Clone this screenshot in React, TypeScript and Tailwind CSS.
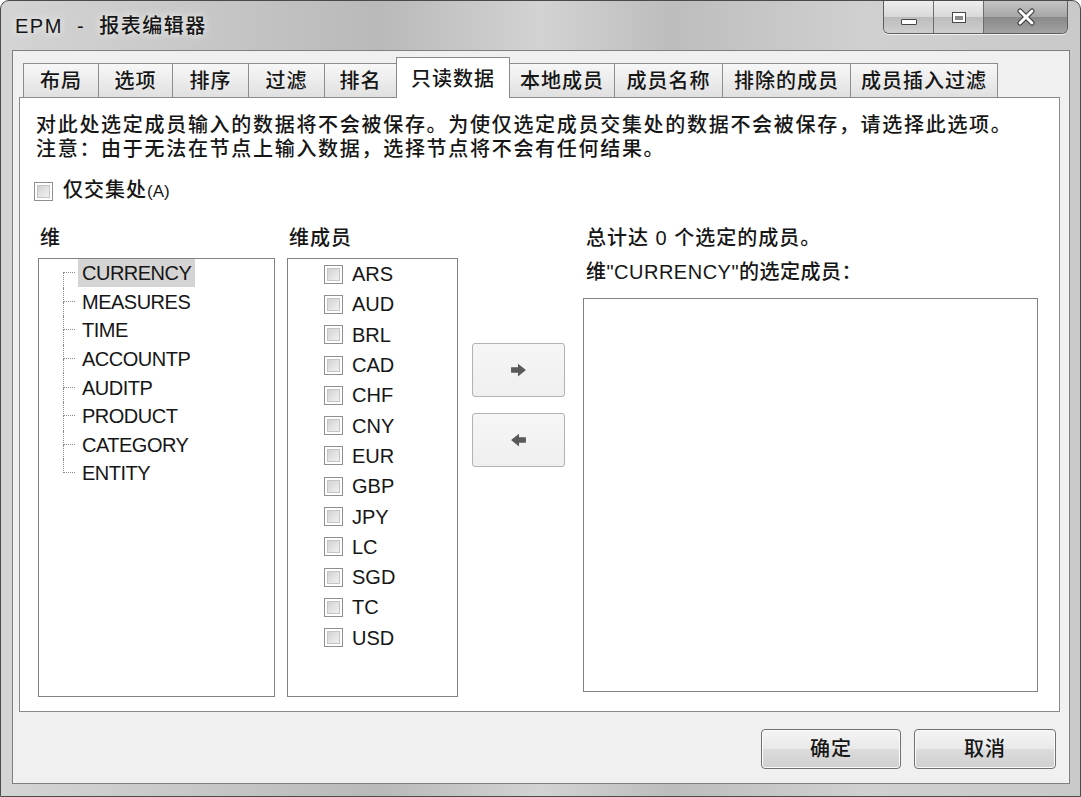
import React from 'react';

const FONT = "font-['Liberation_Sans','Noto_Sans_CJK_SC',sans-serif]";

const tabs = [
  { label: '布局', w: 'w-[75px]' },
  { label: '选项', w: 'w-[74px]' },
  { label: '排序', w: 'w-[76px]' },
  { label: '过滤', w: 'w-[76px]' },
  { label: '排名', w: 'w-[72px]' },
  { label: '只读数据', w: 'w-[114px]', active: true },
  { label: '本地成员', w: 'w-[104px]' },
  { label: '成员名称', w: 'w-[108px]' },
  { label: '排除的成员', w: 'w-[128px]' },
  { label: '成员插入过滤', w: 'w-[148px]' },
];

const dims = ['CURRENCY', 'MEASURES', 'TIME', 'ACCOUNTP', 'AUDITP', 'PRODUCT', 'CATEGORY', 'ENTITY'];

const members = ['ARS', 'AUD', 'BRL', 'CAD', 'CHF', 'CNY', 'EUR', 'GBP', 'JPY', 'LC', 'SGD', 'TC', 'USD'];

function CheckBox() {
  return (
    <div className="w-[19px] h-[19px] shrink-0 border border-[#8e8f8f] bg-white p-[2px]">
      <div className="w-full h-full border border-[#c4c4c4] bg-[linear-gradient(135deg,#d2d2d2,#f2f2f2)]" />
    </div>
  );
}

function Arrow({ left }: { left?: boolean }) {
  return (
    <svg width="17" height="14" viewBox="0 0 16 13" className={left ? 'rotate-180' : ''}>
      <path d="M1 4 H7.5 V0.5 L15 6.5 L7.5 12.5 V9 H1 Z" fill="#5a5a5a" />
    </svg>
  );
}

function CaptionButtons() {
  return (
    <div className="flex h-[33px] border border-t-0 border-[#5e5e5e] rounded-b-[6px] overflow-hidden shadow-[0_1px_0_#f2f2f2]">
      <div className="w-[50px] flex items-end justify-center pb-[8px] border-r border-[#6d6d6d] bg-[linear-gradient(180deg,#eeeeee,#d8d8d8_50%,#bcbcbc_51%,#cfcfcf)]">
        <div className="w-[16px] h-[6px] bg-white border border-[#474747] rounded-[1px]" />
      </div>
      <div className="w-[50px] flex items-center justify-center border-r border-[#6d6d6d] bg-[linear-gradient(180deg,#eeeeee,#d8d8d8_50%,#bcbcbc_51%,#cfcfcf)]">
        <div className="w-[14px] h-[11px] border border-[#474747] bg-white p-[2px] pt-[3px]">
          <div className="w-full h-full bg-[#8a8a8a]" />
        </div>
      </div>
      <div className="w-[83px] flex items-center justify-center bg-[linear-gradient(180deg,#c4c4c4,#a6a6a6_50%,#8a8a8a_51%,#a2a2a2)]">
        <svg width="20" height="18" viewBox="0 0 20 18">
          <path d="M4 3 L16 15 M16 3 L4 15" stroke="#3a3a3a" strokeWidth="5" strokeLinecap="round" />
          <path d="M4 3 L16 15 M16 3 L4 15" stroke="#ffffff" strokeWidth="3" strokeLinecap="round" />
        </svg>
      </div>
    </div>
  );
}

function TreeRow({ name, first, last }: { name: string; first: boolean; last: boolean }) {
  return (
    <div className="flex h-[28.6px] items-stretch">
      <div className="w-[12px] flex flex-col">
        <div className={'h-1/2 border-b border-dotted border-[#8a8a8a] ' + (first ? '' : 'border-l')} />
        <div className={'flex-1 border-dotted border-[#8a8a8a] ' + (last ? '' : 'border-l')} />
      </div>
      <div className="flex items-center ml-[3px]">
        <span
          className={
            'px-[4px] leading-[28px] tracking-[-0.5px] text-[20px] ' + (first ? 'bg-[#d4d4d4]' : '')
          }
        >
          {name}
        </span>
      </div>
    </div>
  );
}

export default function App() {
  return (
    <div className={'w-[1081px] h-[797px] overflow-hidden bg-white font-medium ' + FONT}>
      <div className="w-[1081px] h-[797px] rounded-t-[9px] border border-[#4a4a4a] bg-[linear-gradient(90deg,#d4d4d4_0%,#c6c6c6_20%,#b9b9b9_35%,#d3d3d3_50%,#bdbdbd_62%,#d0d0d0_80%,#c9c9c9_100%)] text-[#161616]">
        {/* title bar */}
        <div className="flex h-[49px]">
          <div className="pl-[14px] pt-[13px] leading-[24px] text-[20px] tracking-[1.5px] whitespace-pre [text-shadow:0_0_8px_#ffffff]">
            EPM  -  报表编辑器
          </div>
          <div className="ml-auto mr-[12px]">
            <CaptionButtons />
          </div>
        </div>

        {/* client area */}
        <div className="ml-[11px] w-[1058px] h-[734px] border border-[#7f7f7f] bg-[#f0f0f0] pt-[6px] pl-[6px]">
          {/* tabs */}
          <div className="flex items-end h-[40px] pl-[4px]">
            {tabs.map((t, i) => {
              const prevActive = i > 0 && tabs[i - 1].active;
              const isLast = i === tabs.length - 1;
              if (t.active) {
                return (
                  <div
                    key={t.label}
                    className={
                      t.w +
                      ' h-[41px] -mb-px relative z-10 bg-white border border-b-0 border-[#8a8a8a] flex items-center justify-center pt-[1px] text-[20px] tracking-[1px]'
                    }
                  >
                    {t.label}
                  </div>
                );
              }
              return (
                <div
                  key={t.label}
                  className={
                    t.w +
                    ' h-[34px] border-t border-[#8d8d8d] bg-[linear-gradient(180deg,#f7f7f7,#ececec_50%,#e0e0e0)] flex items-center justify-center text-[20px] tracking-[1px] ' +
                    (prevActive ? '' : 'border-l ') +
                    (isLast ? 'border-r' : '')
                  }
                >
                  {t.label}
                </div>
              );
            })}
          </div>

          {/* panel */}
          <div className="w-[1041px] h-[615px] border border-[#8a8a8a] bg-white pt-[15px] pl-[16px]">
            <div className="text-[20px] leading-[24px] tracking-[1.7px]">
              <div>对此处选定成员输入的数据将不会被保存。为使仅选定成员交集处的数据不会被保存，请选择此选项。</div>
              <div>注意：由于无法在节点上输入数据，选择节点将不会有任何结果。</div>
            </div>

            <div className="mt-[18px] h-[24px] flex items-center -ml-[2px]">
              <CheckBox />
              <span className="ml-[10px] text-[20px] tracking-[1px] leading-[24px]">
                仅交集处<span className="text-[17px] tracking-[0px]">(A)</span>
              </span>
            </div>

            <div className="mt-[23px] flex">
              {/* dimensions */}
              <div className="ml-[2px] w-[237px]">
                <div className="h-[24px] leading-[24px] text-[20px] pl-[2px] mb-[8px]">维</div>
                <div className="h-[439px] border border-[#828282] pl-[24px]">
                  {dims.map((d, i) => (
                    <TreeRow key={d} name={d} first={i === 0} last={i === dims.length - 1} />
                  ))}
                </div>
              </div>

              {/* members */}
              <div className="ml-[12px] w-[171px]">
                <div className="h-[24px] leading-[24px] text-[20px] tracking-[1px] pl-[2px] mb-[8px]">维成员</div>
                <div className="h-[439px] border border-[#828282] pl-[36px]">
                  {members.map((m) => (
                    <div key={m} className="h-[30.3px] flex items-center">
                      <CheckBox />
                      <span className="ml-[9px] text-[20px]">{m}</span>
                    </div>
                  ))}
                </div>
              </div>

              {/* move buttons */}
              <div className="ml-[14px] w-[93px] pt-[117px] flex flex-col gap-[16px]">
                <button className="h-[54px] w-full rounded-[3px] border border-[#b2b2b2] bg-[linear-gradient(180deg,#f6f6f6,#efefef)] flex items-center justify-center">
                  <Arrow />
                </button>
                <button className="h-[54px] w-full rounded-[3px] border border-[#b2b2b2] bg-[linear-gradient(180deg,#f6f6f6,#efefef)] flex items-center justify-center">
                  <Arrow left />
                </button>
              </div>

              {/* selected */}
              <div className="ml-[18px] w-[455px]">
                <div className="h-[24px] leading-[24px] text-[20px] tracking-[1px] pl-[3px]">总计达 0 个选定的成员。</div>
                <div className="mt-[10px] h-[24px] leading-[24px] text-[20px] tracking-[0.5px] pl-[3px]">
                  维"CURRENCY"的选定成员：
                </div>
                <div className="mt-[14px] h-[394px] border border-[#828282]" />
              </div>
            </div>
          </div>

          {/* dialog buttons */}
          <div className="mt-[17px] flex justify-end pr-[13px] gap-[13px]">
            <button className="w-[140px] h-[40px] rounded-[4px] border border-[#707070] bg-[linear-gradient(180deg,#f4f4f4,#e9e9e9_50%,#dcdcdc_51%,#cfcfcf)] text-[20px] tracking-[1px] shadow-[inset_0_0_0_1px_#fbfbfb]">
              确定
            </button>
            <button className="w-[142px] h-[40px] rounded-[4px] border border-[#707070] bg-[linear-gradient(180deg,#f4f4f4,#e9e9e9_50%,#dcdcdc_51%,#cfcfcf)] text-[20px] tracking-[1px] shadow-[inset_0_0_0_1px_#fbfbfb]">
              取消
            </button>
          </div>
        </div>
      </div>
    </div>
  );
}
